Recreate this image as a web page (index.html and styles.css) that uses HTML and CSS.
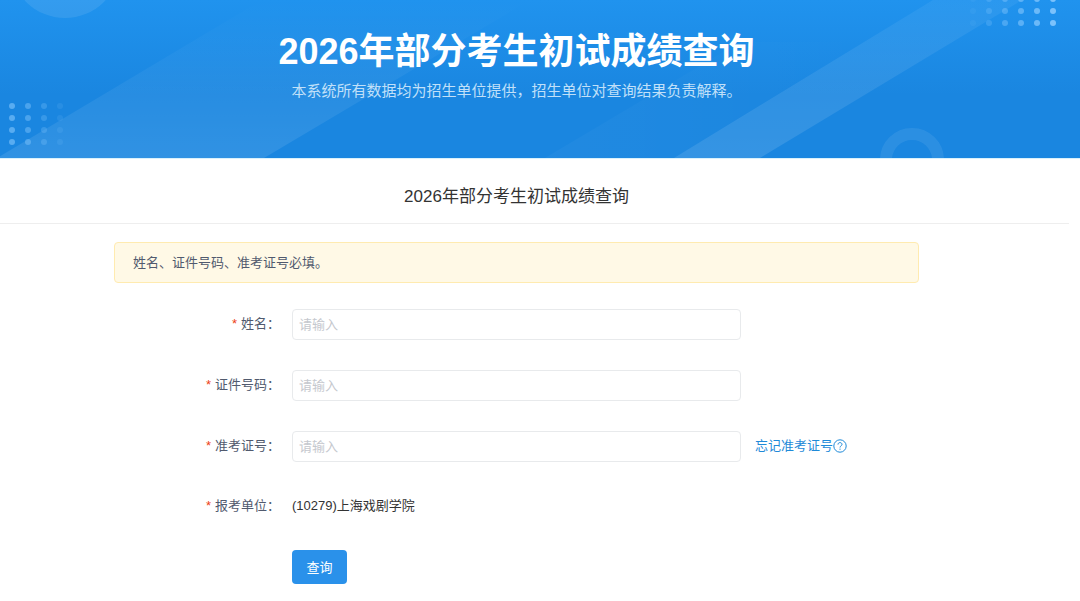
FILE: index.html
```html
<!DOCTYPE html>
<html lang="zh-CN">
<head>
    <meta charset="UTF-8">
    <meta name="viewport" content="width=device-width, initial-scale=1">
    <title>2026年部分考生初试成绩查询</title>
    <link rel="stylesheet" href="styles.css">
</head>
<body>
    <header class="banner">
        <svg class="banner-bg" viewBox="0 0 1080 158" preserveAspectRatio="xMidYMid slice" aria-hidden="true">
            <defs>
                <linearGradient id="band" x1="0" y1="0" x2="0" y2="1">
                    <stop offset="0" stop-color="#fff" stop-opacity="0"/>
                    <stop offset="1" stop-color="#fff" stop-opacity=".1"/>
                </linearGradient>
                <linearGradient id="stripe" x1="0" y1="0" x2="0" y2="1">
                    <stop offset="0" stop-color="#fff" stop-opacity=".05"/>
                    <stop offset="1" stop-color="#fff" stop-opacity=".12"/>
                </linearGradient>
                <linearGradient id="faint" x1="0" y1="0" x2="1" y2="0">
                    <stop offset="0" stop-color="#fff" stop-opacity=".03"/>
                    <stop offset="1" stop-color="#fff" stop-opacity="0"/>
                </linearGradient>
            </defs>
            <path d="M-3 158 262 0H530L264 158Z" fill="url(#band)"/>
            <path d="M545 158 740 42 866 42 674 158Z" fill="url(#faint)"/>
            <path d="M674 158 933 0H1022L760 158Z" fill="url(#stripe)"/>
            <circle cx="65" cy="-37" r="55" fill="#fff" fill-opacity=".09"/>
            <circle cx="912" cy="160" r="26" fill="none" stroke="#fff" stroke-opacity=".08" stroke-width="12"/>
            <!-- dots, one column per group -->
            <g fill="#8ccbff">
                <g opacity=".55"><circle cx="12" cy="106" r="3"/><circle cx="12" cy="118" r="3"/><circle cx="12" cy="130" r="3"/><circle cx="12" cy="142" r="3"/></g>
                <g opacity=".42"><circle cx="28" cy="106" r="3"/><circle cx="28" cy="118" r="3"/><circle cx="28" cy="130" r="3"/><circle cx="28" cy="142" r="3"/></g>
                <g opacity=".26"><circle cx="44" cy="106" r="3"/><circle cx="44" cy="118" r="3"/><circle cx="44" cy="130" r="3"/><circle cx="44" cy="142" r="3"/></g>
                <g opacity=".12"><circle cx="60" cy="106" r="3"/><circle cx="60" cy="118" r="3"/><circle cx="60" cy="130" r="3"/><circle cx="60" cy="142" r="3"/></g>
                <g opacity=".08"><circle cx="973" cy="-1" r="3"/><circle cx="973" cy="11" r="3"/><circle cx="973" cy="23" r="3"/></g>
                <g opacity=".25"><circle cx="989" cy="-1" r="3"/><circle cx="989" cy="11" r="3"/><circle cx="989" cy="23" r="3"/></g>
                <g opacity=".4"><circle cx="1005" cy="-1" r="3"/><circle cx="1005" cy="11" r="3"/><circle cx="1005" cy="23" r="3"/></g>
                <g opacity=".55"><circle cx="1021" cy="-1" r="3"/><circle cx="1021" cy="11" r="3"/><circle cx="1021" cy="23" r="3"/></g>
                <g opacity=".7"><circle cx="1037" cy="-1" r="3"/><circle cx="1037" cy="11" r="3"/><circle cx="1037" cy="23" r="3"/></g>
                <g opacity=".85"><circle cx="1053" cy="-1" r="3"/><circle cx="1053" cy="11" r="3"/><circle cx="1053" cy="23" r="3"/></g>
            </g>
        </svg>
        <div class="banner-text">
            <h1>2026年部分考生初试成绩查询</h1>
            <p>本系统所有数据均为招生单位提供，招生单位对查询结果负责解释。</p>
        </div>
    </header>
    <main>
        <h2>2026年部分考生初试成绩查询</h2>
        <div class="content">
            <div class="alert">姓名、证件号码、准考证号必填。</div>
            <form>
                <div class="form-item">
                    <label for="xm">姓名：</label>
                    <input type="text" id="xm" placeholder="请输入" required>
                </div>
                <div class="form-item">
                    <label for="zjhm">证件号码：</label>
                    <input type="text" id="zjhm" placeholder="请输入" required>
                </div>
                <div class="form-item">
                    <label for="ksbh">准考证号：</label>
                    <input type="text" id="ksbh" placeholder="请输入" required>
                    <a class="forget" href="#">忘记准考证号<svg width="14" height="14" viewBox="0 0 14 14" fill="none" stroke="currentColor" aria-hidden="true"><circle cx="7" cy="7" r="6.2"/><path d="M5 5.6C5 4.3 5.8 3.6 7 3.6s2 .8 2 1.8c0 1.4-2 1.5-2 3.1M7 9.6v1.2"/></svg></a>
                </div>
                <div class="form-item">
                    <label for="bkdw">报考单位：</label>
                    <output id="bkdw">(10279)上海戏剧学院</output>
                </div>
                <button type="submit">查询</button>
            </form>
        </div>
    </main>
</body>
</html>
```
FILE: styles.css
```css
*{
    margin: 0;
    padding: 0;
    box-sizing: border-box;
}
body{
    font-family: "Liberation Sans", "Noto Sans CJK SC", sans-serif;
    font-size: 13px;
    line-height: 19px;
    color: #333;
    background: white;
}
.banner{
    position: relative;
    overflow: hidden;
    padding: 30px 47px 56px 0;
    background: linear-gradient(#2093ee, #1a86e0 60%, #1a86e0);
    border-bottom: 1px solid #d9f1fc;
    text-align: center;
    color: white;
}
.banner-bg{
    position: absolute;
    top: 0;
    left: 0;
    width: 100%;
    height: 100%;
}
.banner-text{
    position: relative;
}
.banner h1{
    font-size: 36px;
    line-height: 44px;
}
.banner p{
    margin-top: 6px;
    font-size: 15px;
    line-height: 22px;
    color: #c1e0f9;
}
main{
    padding-bottom: 18px;
}
h2{
    margin-right: 11px;
    padding: 27px 36px 15px 0;
    border-bottom: 1px solid #eee;
    font-size: 17px;
    font-weight: normal;
    line-height: 22px;
    text-align: center;
}
.content{
    margin: 18px 161px 0 114px;
}
.alert{
    padding: 10px 18px;
    border: 1px solid #ffebb0;
    border-radius: 4px;
    background: #fff9e6;
    color: #515a6e;
}
form{
    margin-top: 26px;
}
.form-item{
    display: grid;
    grid-template-columns: 178px 1fr 178px;
    align-items: center;
    min-height: 28px;
    margin-bottom: 30px;
}
.form-item label{
    padding: 0 12px 2px 0;
    text-align: right;
    color: #515a6e;
}
.form-item label::before{
    content: "*";
    margin-right: 4px;
    color: #ed4014;
}
.form-item input{
    width: 100%;
    height: 31px;
    padding: 0 6px;
    border: 1px solid #e8eaec;
    border-radius: 4px;
    font: inherit;
    color: #515a6e;
}
.form-item input::placeholder{
    color: #c5c8ce;
}
.form-item output{
    padding-bottom: 2px;
}
.forget{
    display: flex;
    align-items: center;
    margin-left: 14px;
    padding-bottom: 2px;
    color: #1f8ad8;
    text-decoration: none;
}
button{
    min-width: 55px;
    height: 34px;
    margin-left: 178px;
    padding: 0 14px;
    border: none;
    border-radius: 4px;
    background: #2a91ea;
    font: inherit;
    color: white;
    cursor: pointer;
}
```
